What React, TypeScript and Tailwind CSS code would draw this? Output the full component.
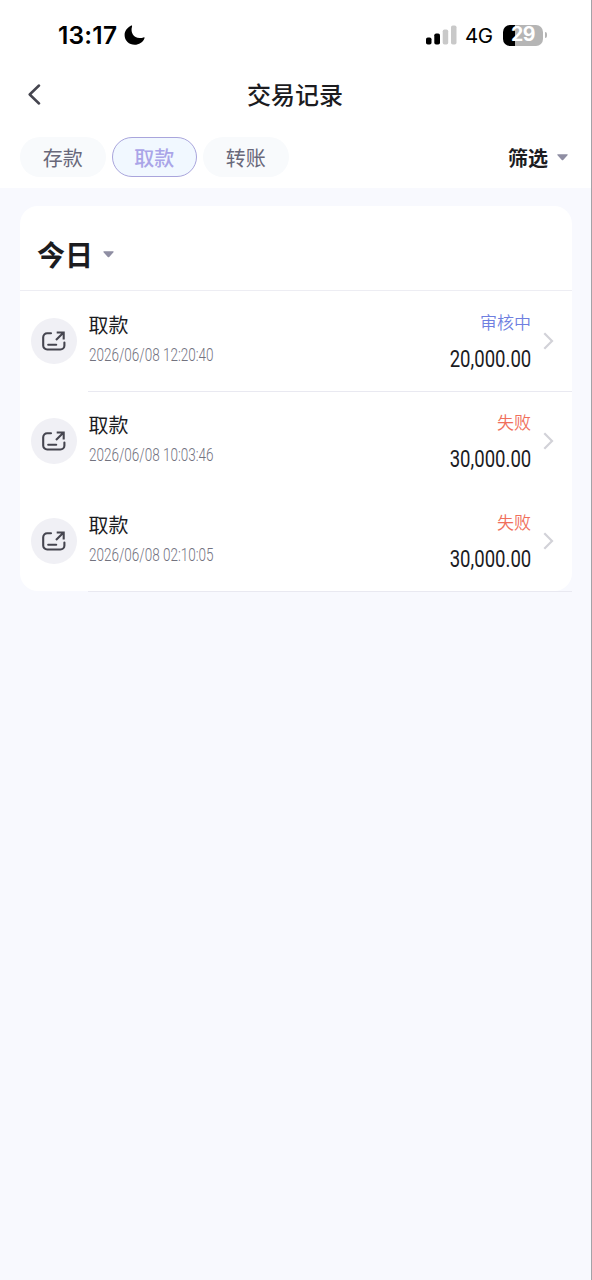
import { useState } from "react";
import clsx from "clsx";

type Status = "pending" | "failed";

interface Transaction {
  id: number;
  title: string;
  time: string;
  amount: string;
  status: Status;
  divider: boolean;
}

const tabs = ["存款", "取款", "转账"];

const transactions: Transaction[] = [
  { id: 1, title: "取款", time: "2026/06/08 12:20:40", amount: "20,000.00", status: "pending", divider: true },
  { id: 2, title: "取款", time: "2026/06/08 10:03:46", amount: "30,000.00", status: "failed", divider: false },
  { id: 3, title: "取款", time: "2026/06/08 02:10:05", amount: "30,000.00", status: "failed", divider: true },
];

function Caret() {
  return (
    <svg width="11" height="7" viewBox="0 0 11 7" fill="#8f8ea3">
      <path d="M1 0.3h9c.7 0 .9.6.5 1L6.2 6a1 1 0 0 1-1.4 0L.5 1.3C.1.9.3.3 1 .3Z" />
    </svg>
  );
}

function StatusBar() {
  return (
    <div className="flex h-[70px] items-center justify-between pl-[58px] pr-[44px] text-black">
      <div className="flex items-center gap-[6px]">
        <span className="w-[60px] whitespace-nowrap font-['Inter',sans-serif] text-[24.500px] font-semibold leading-none tracking-[0.200px]">
          13:17
        </span>
        <svg width="21" height="20" viewBox="0 0 21 20" fill="currentColor">
          <path d="M6.500.9C7.600.2 8.400.6 8 1.700C6.300 7.400 9.600 12.900 15.600 13.100c1.600 0 2.700-.3 3.900-.7c.9-.2 1.300.2.900 1C18.700 17.300 15 19.700 10.700 19.700 5 19.700.6 15.500.6 9.900.6 6.100 2.900 2.700 6.500.9Z" />
        </svg>
      </div>
      <div className="flex items-center">
        <svg width="31" height="20" viewBox="0 0 31 20">
          <rect x="0" y="12.500" width="5.500" height="7" rx="1.800" fill="#000" />
          <rect x="8.300" y="8.500" width="5.700" height="11" rx="1.800" fill="#000" />
          <rect x="16.700" y="4.500" width="5.500" height="15" rx="1.800" fill="#c9c9c9" />
          <rect x="25" y="0.500" width="5.500" height="19" rx="1.800" fill="#c9c9c9" />
        </svg>
        <span className="ml-[8px] w-[30px] whitespace-nowrap pt-[2px] font-['Inter',sans-serif] text-[20.500px] font-normal leading-none tracking-[-0.400px]">
          4G
        </span>
        <div className="ml-[8px] flex h-[21px] w-[40px] items-center justify-center rounded-[7px] bg-[linear-gradient(to_right,#000_12px,#b5b5b5_12px)]">
          <span className="font-['Inter',sans-serif] text-[19.500px] font-bold leading-none tracking-[-0.500px] text-white">29</span>
        </div>
        <div className="ml-[1.500px] h-[6px] w-[2.500px] rounded-r-full bg-[#b5b5b5]" />
      </div>
    </div>
  );
}

function WithdrawIcon() {
  return (
    <div className="flex size-[46px] shrink-0 items-center justify-center rounded-full bg-[#f0f0f5]">
      <svg width="24" height="20" viewBox="0 0 24 20" fill="none" stroke="#45454f" strokeWidth="2.100">
        <path d="M9 2.200H5.200A4 4 0 0 0 1.200 6.200V14.500A4 4 0 0 0 5.200 18.500H18.400A4 4 0 0 0 22.400 14.500V11.500" strokeLinecap="round" />
        <path d="M14 9 21.300 1.700M14.700 1.500H21.700V8.500" />
        <path d="M6.200 13.700H14.200" strokeLinecap="round" />
      </svg>
    </div>
  );
}

function TransactionRow({ item }: { item: Transaction }) {
  return (
    <div className="flex h-[100px] pl-[11px]">
      <div className="flex items-center">
        <WithdrawIcon />
      </div>
      <div
        className={clsx(
          "-mb-px ml-[11px] flex flex-1 items-center justify-between border-b pr-[18px]",
          item.divider ? "border-[#e9e9f1]" : "border-transparent"
        )}
      >
        <div className="w-[126px] pb-[4px] pl-[0.500px]">
          <div className="text-[20px] leading-[28px] text-[#1c1c1f]">{item.title}</div>
          <div className="mt-[4px] origin-left scale-x-[0.750] whitespace-nowrap font-['Roboto',sans-serif] text-[18px] font-light leading-[24px] text-[#73737f]">
            {item.time}
          </div>
        </div>
        <div className="flex items-center gap-[12px]">
          <div className="flex flex-col items-end">
            <div
              className={clsx(
                "text-[17px] font-[350] leading-[24px]",
                item.status === "pending" ? "text-[#6f7fe0]" : "text-[#f0705c]"
              )}
            >
              {item.status === "pending" ? "审核中" : "失败"}
            </div>
            <div className="mt-[11px] origin-right scale-x-[0.790] font-['Roboto',sans-serif] text-[23.500px] leading-[28px] text-[#1c1c1f]">
              {item.amount}
            </div>
          </div>
          <svg width="11" height="18" viewBox="0 0 11 18" fill="none" stroke="#d2d2d8" strokeWidth="2.200">
            <path d="M1.300 1.300 9 9 1.300 16.700" />
          </svg>
        </div>
      </div>
    </div>
  );
}

export default function App() {
  const [activeTab, setActiveTab] = useState("取款");

  return (
    <div className="min-h-screen border-r border-[#a3a3a8] bg-[#f8f9fe] font-['Noto_Sans_CJK_SC',sans-serif]">
      <header className="h-[188px] bg-white">
        <StatusBar />
        <div className="grid h-[48px] grid-cols-[1fr_auto_1fr] items-center pl-[28px] pr-[29px]">
          <button className="justify-self-start" aria-label="返回">
            <svg width="13" height="21" viewBox="0 0 13 21" fill="none" stroke="#45454f" strokeWidth="2.500" strokeLinecap="round" strokeLinejoin="round">
              <path d="M11 1.500 1.700 10.500 11 19.500" />
            </svg>
          </button>
          <h1 className="text-[24px] font-medium leading-none text-[#1c1c1f]">交易记录</h1>
        </div>

        <div className="mt-[19px] flex items-center justify-between pl-[20px] pr-[23px]">
          <div className="flex gap-[6px]">
            {tabs.map((tab) => (
              <button
                key={tab}
                onClick={() => setActiveTab(tab)}
                className={clsx(
                  "h-[40px] w-[85.500px] rounded-full border pt-[2px] text-[20px] leading-none",
                  tab === activeTab
                    ? "border-[#a9a5dc] bg-[#f1f8ff] font-medium text-[#aaa5e8]"
                    : "border-transparent bg-[#f8fafc] text-[#68687a]"
                )}
              >
                {tab}
              </button>
            ))}
          </div>
          <button className="flex items-center gap-[9px] text-[20px] font-bold leading-none text-[#1c1c1f]">
            <span className="pt-[2px]">筛选</span>
            <Caret />
          </button>
        </div>
      </header>

      <main className="pl-[20px] pr-[19px] pt-[18px]">
        <section className="rounded-[18px] bg-white">
          <button className="flex h-[85px] w-full items-center gap-[10px] border-b border-[#ededf3] pl-[17px] pt-[12px] text-[28px] font-bold leading-none text-[#1c1c1f]">
            今日
            <Caret />
          </button>
          {transactions.map((item) => (
            <TransactionRow key={item.id} item={item} />
          ))}
        </section>
      </main>
    </div>
  );
}
